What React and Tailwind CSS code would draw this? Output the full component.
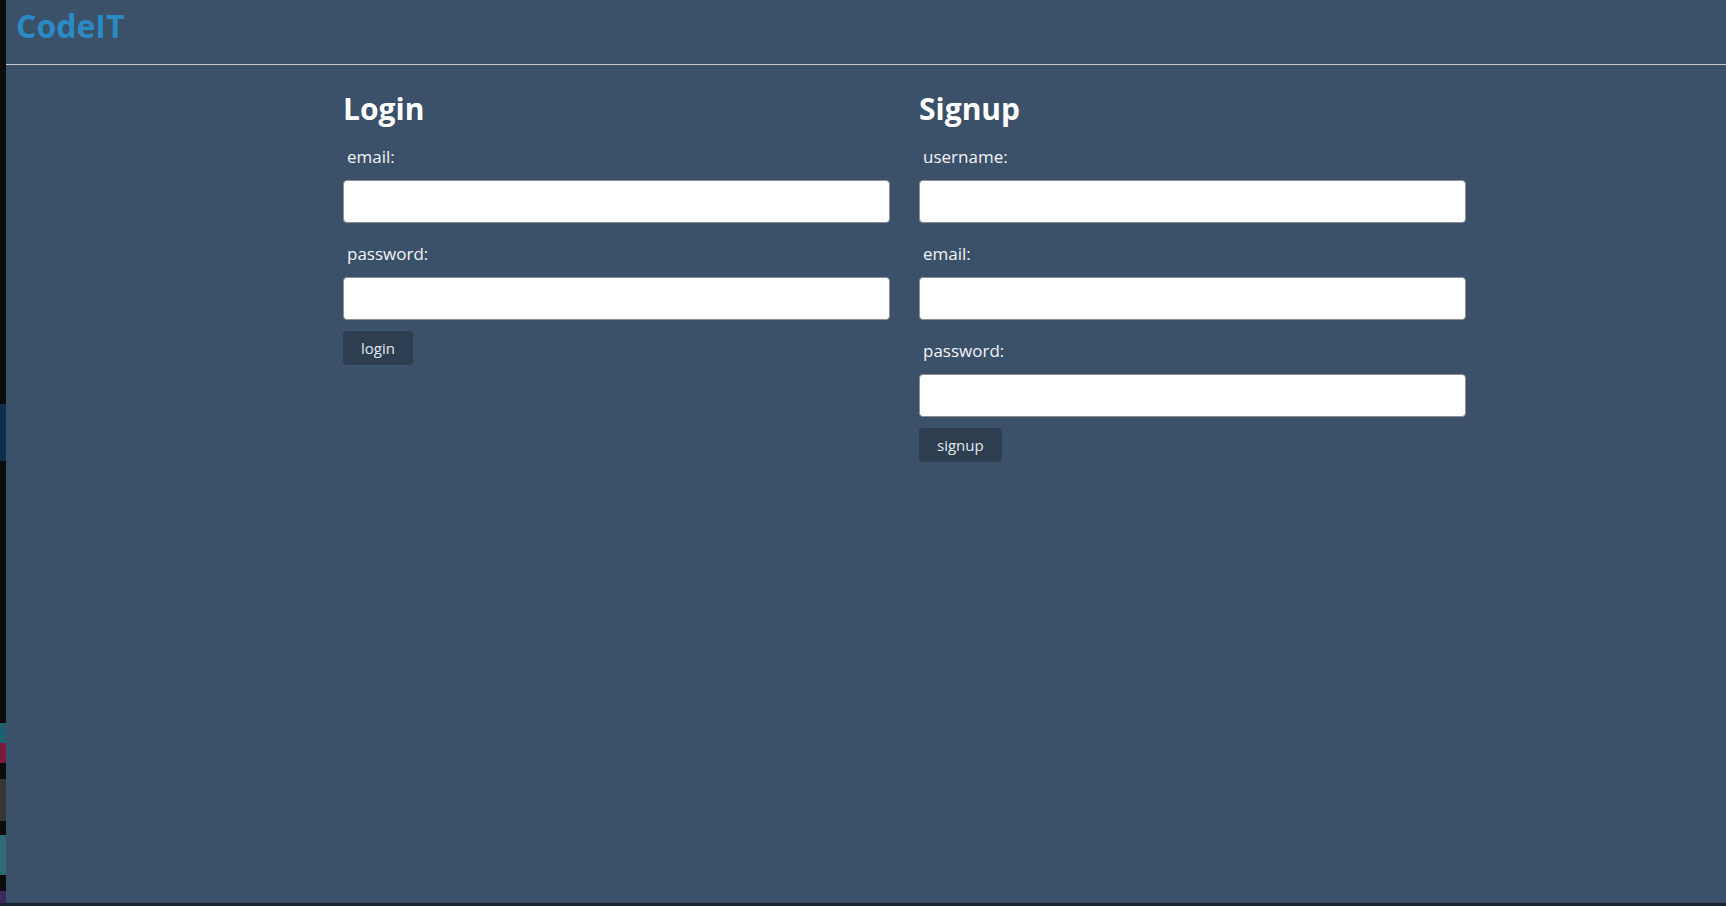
import React from "react";

function Field({ label }) {
  return (
    <div className="flex flex-col">
      <label className="pl-[4px] text-[17px] leading-[24px] text-[#f2f4f7] mb-[11px]">{label}</label>
      <input
        type="text"
        className="h-[43px] w-full rounded-[4px] border border-[#8d8f93] bg-white outline-none"
      />
    </div>
  );
}

function Form({ title, fields, button }) {
  return (
    <div className="flex w-[547px] flex-col">
      <h2 className="mb-[18px] text-[30px] font-bold leading-[36px] text-white">{title}</h2>
      <div className="flex flex-col gap-[19px]">
        {fields.map((f) => (
          <Field key={f} label={f} />
        ))}
      </div>
      <div className="mt-[11px]">
        <button className="h-[34px] rounded-[4px] bg-[#2e3e51] px-[18px] text-[15px] leading-[20px] text-[#e3e8ee]">
          {button}
        </button>
      </div>
    </div>
  );
}

export default function App() {
  return (
    <div
      className="flex h-[906px] w-full flex-col overflow-hidden bg-[#1a2332]"
      style={{ fontFamily: '"Open Sans", "Noto Sans", sans-serif' }}
    >
      <div className="flex h-[903px] w-full">
        <div className="flex w-[6px] flex-col bg-[#0c0c0d]">
          <div className="h-[404px]" />
          <div className="h-[57px] bg-[#0e2f4d]" />
          <div className="h-[262px]" />
          <div className="h-[20px] bg-[#1f6070]" />
          <div className="h-[20px] bg-[#7a1a3c]" />
          <div className="h-[16px]" />
          <div className="h-[42px] bg-[#37352f]" />
          <div className="h-[14px]" />
          <div className="h-[40px] bg-[#2f6a75]" />
          <div className="h-[16px]" />
          <div className="flex-1 bg-[#3b2a5c]" />
        </div>
        <div className="flex flex-1 flex-col bg-[#3b5069]">
          <header className="flex h-[65px] items-start border-b border-[#c4c8cd] pl-[10px]">
            <span className="mt-[4px] text-[32px] font-bold leading-[44px] text-[#2a8bc4]">CodeIT</span>
          </header>
          <main className="flex gap-[29px] pl-[337px] pt-[26px]">
            <Form title="Login" fields={["email:", "password:"]} button="login" />
            <Form title="Signup" fields={["username:", "email:", "password:"]} button="signup" />
          </main>
        </div>
      </div>
    </div>
  );
}
